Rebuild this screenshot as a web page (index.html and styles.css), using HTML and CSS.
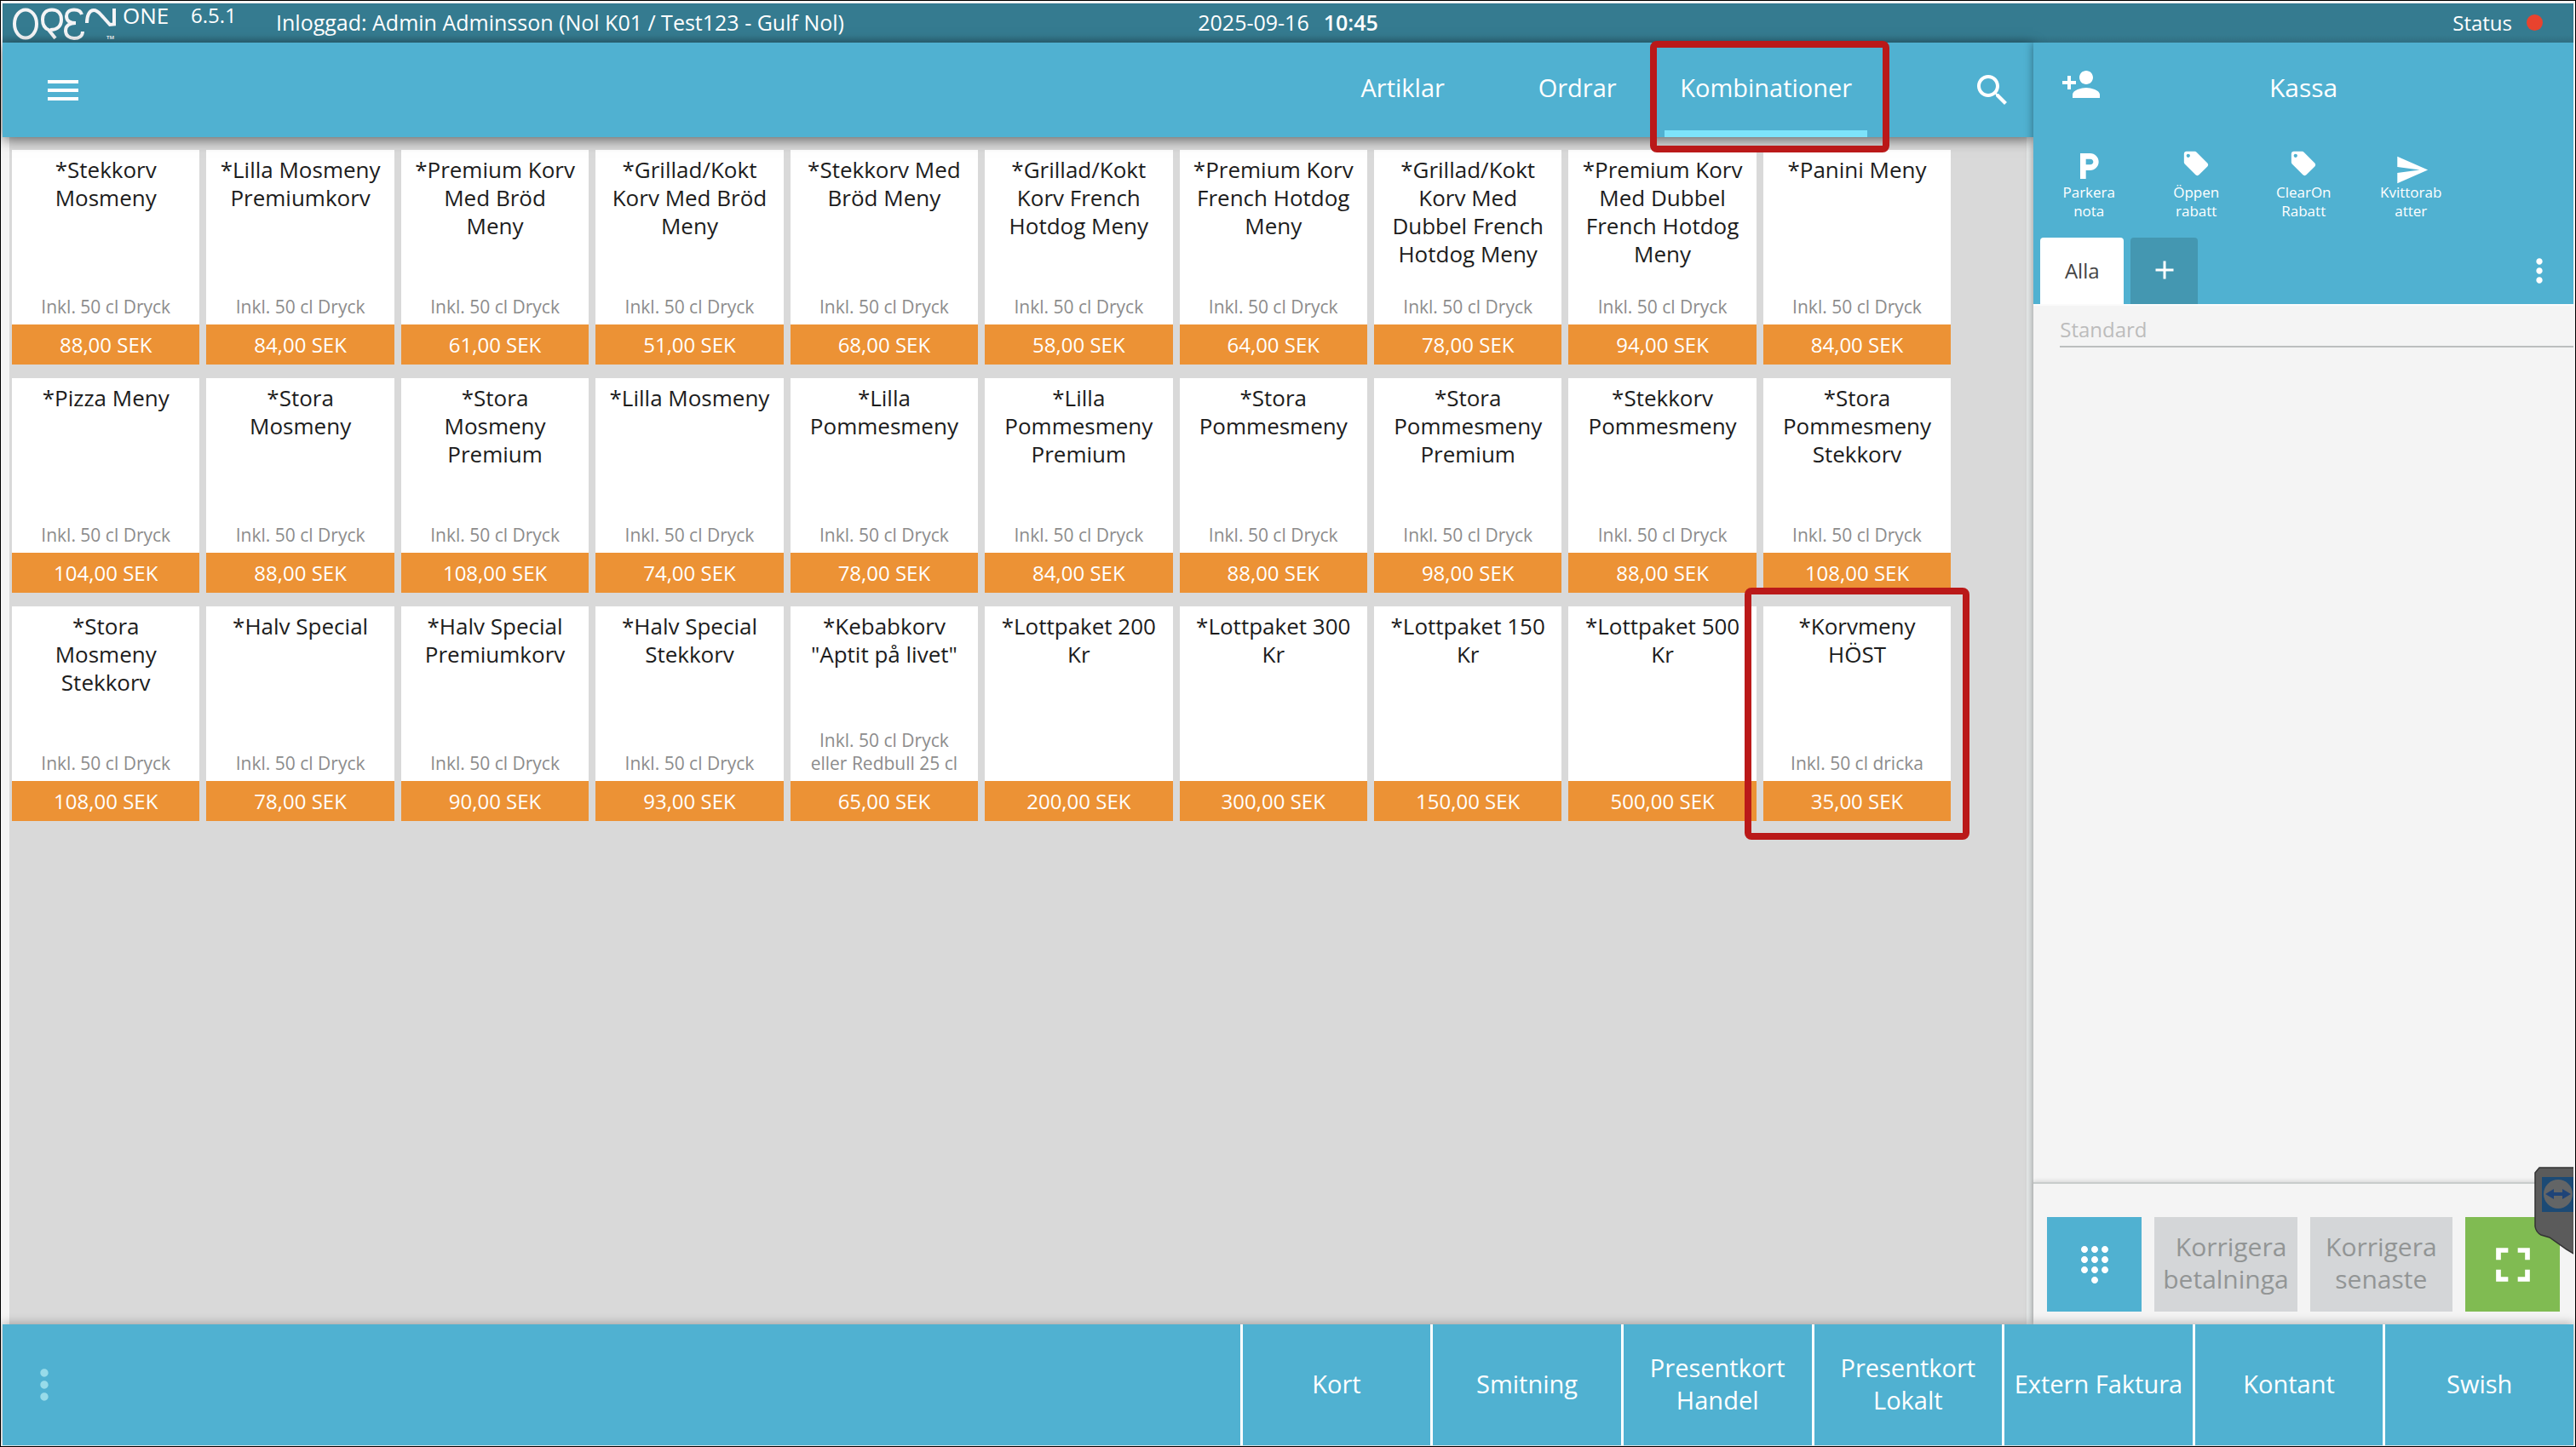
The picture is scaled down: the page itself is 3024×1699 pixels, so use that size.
FILE: index.html
```html
<!DOCTYPE html>
<html lang="sv">
<head>
<meta charset="utf-8">
<meta name="viewport" content="width=device-width, initial-scale=1">
<title>Open One – Kassa</title>
<link rel="stylesheet" href="styles.css">
</head>
<body>
<div class="app">
  <header class="topbar">
    <div class="brand">
      <svg class="logo" viewBox="0 0 130 46" aria-hidden="true">
        <g fill="none" stroke="#f4f4f6" stroke-width="4">
          <ellipse cx="19" cy="23" rx="13" ry="16.500"/>
          <path d="M54 40 L46 30 C41 28 39 24 39 18 C39 11 43 6.500 50 6.500 C57 6.500 61 11 61 18 C61 25 57 30 48 30"/>
          <path d="M85 12 C84 8 81 6.500 76 6.500 C70 6.500 67 10 67 14 C67 19 70 22 78 22 C71 22 66 25 66 31 C66 37 71 40 76 40 C82 40 86 37 86 32"/>
          <path d="M91 22 C91 13 94 7 99 7 C104 7 106 11 110 15 L118 24 L123 23.500 L123 5"/>
        </g>
        <text class="logo-tm" x="114" y="41">TM</text>
      </svg>
      <span class="product">ONE</span>
      <span class="version">6.5.1</span>
      <span class="login">Inloggad: Admin Adminsson (Nol K01 / Test123 - Gulf Nol)</span>
    </div>
    <span class="clock">2025-09-16<b>10:45</b></span>
    <span class="status">Status<i class="status-dot"></i></span>
  </header>

  <div class="body">
    <div class="left">
      <nav class="navbar">
        <button class="icon-btn menu-btn" aria-label="Meny">
          <svg width="48" height="48" viewBox="0 0 24 24"><path d="M3 18h18v-2H3zm0-5h18v-2H3zm0-7v2h18V6z"/></svg>
        </button>
        <div class="tabs">
          <a class="tab" href="#artiklar">Artiklar</a>
          <a class="tab" href="#ordrar">Ordrar</a>
          <a class="tab tab-active marked-tab" href="#kombinationer">Kombinationer</a>
        </div>
        <button class="icon-btn search-btn" aria-label="Sök">
          <svg width="48" height="48" viewBox="0 0 24 24"><path d="M15.500 14h-.79l-.28-.27C15.410 12.590 16 11.110 16 9.500 16 5.910 13.090 3 9.500 3S3 5.910 3 9.500 5.910 16 9.500 16c1.610 0 3.090-.59 4.230-1.570l.27.28v.79l5 4.990L20.490 19l-4.990-5zm-6 0C7.010 14 5 11.990 5 9.500S7.010 5 9.500 5 14 7.010 14 9.500 11.990 14 9.500 14z"/></svg>
        </button>
      </nav>

      <main class="products">
        <button class="tile"><span class="name">*Stekkorv<br>Mosmeny</span><span class="note">Inkl. 50 cl Dryck</span><span class="price">88,00 SEK</span></button>
        <button class="tile"><span class="name">*Lilla Mosmeny<br>Premiumkorv</span><span class="note">Inkl. 50 cl Dryck</span><span class="price">84,00 SEK</span></button>
        <button class="tile"><span class="name">*Premium Korv<br>Med Bröd<br>Meny</span><span class="note">Inkl. 50 cl Dryck</span><span class="price">61,00 SEK</span></button>
        <button class="tile"><span class="name">*Grillad/Kokt<br>Korv Med Bröd<br>Meny</span><span class="note">Inkl. 50 cl Dryck</span><span class="price">51,00 SEK</span></button>
        <button class="tile"><span class="name">*Stekkorv Med<br>Bröd Meny</span><span class="note">Inkl. 50 cl Dryck</span><span class="price">68,00 SEK</span></button>
        <button class="tile"><span class="name">*Grillad/Kokt<br>Korv French<br>Hotdog Meny</span><span class="note">Inkl. 50 cl Dryck</span><span class="price">58,00 SEK</span></button>
        <button class="tile"><span class="name">*Premium Korv<br>French Hotdog<br>Meny</span><span class="note">Inkl. 50 cl Dryck</span><span class="price">64,00 SEK</span></button>
        <button class="tile"><span class="name">*Grillad/Kokt<br>Korv Med<br>Dubbel French<br>Hotdog Meny</span><span class="note">Inkl. 50 cl Dryck</span><span class="price">78,00 SEK</span></button>
        <button class="tile"><span class="name">*Premium Korv<br>Med Dubbel<br>French Hotdog<br>Meny</span><span class="note">Inkl. 50 cl Dryck</span><span class="price">94,00 SEK</span></button>
        <button class="tile"><span class="name">*Panini Meny</span><span class="note">Inkl. 50 cl Dryck</span><span class="price">84,00 SEK</span></button>

        <button class="tile"><span class="name">*Pizza Meny</span><span class="note">Inkl. 50 cl Dryck</span><span class="price">104,00 SEK</span></button>
        <button class="tile"><span class="name">*Stora<br>Mosmeny</span><span class="note">Inkl. 50 cl Dryck</span><span class="price">88,00 SEK</span></button>
        <button class="tile"><span class="name">*Stora<br>Mosmeny<br>Premium</span><span class="note">Inkl. 50 cl Dryck</span><span class="price">108,00 SEK</span></button>
        <button class="tile"><span class="name">*Lilla Mosmeny</span><span class="note">Inkl. 50 cl Dryck</span><span class="price">74,00 SEK</span></button>
        <button class="tile"><span class="name">*Lilla<br>Pommesmeny</span><span class="note">Inkl. 50 cl Dryck</span><span class="price">78,00 SEK</span></button>
        <button class="tile"><span class="name">*Lilla<br>Pommesmeny<br>Premium</span><span class="note">Inkl. 50 cl Dryck</span><span class="price">84,00 SEK</span></button>
        <button class="tile"><span class="name">*Stora<br>Pommesmeny</span><span class="note">Inkl. 50 cl Dryck</span><span class="price">88,00 SEK</span></button>
        <button class="tile"><span class="name">*Stora<br>Pommesmeny<br>Premium</span><span class="note">Inkl. 50 cl Dryck</span><span class="price">98,00 SEK</span></button>
        <button class="tile"><span class="name">*Stekkorv<br>Pommesmeny</span><span class="note">Inkl. 50 cl Dryck</span><span class="price">88,00 SEK</span></button>
        <button class="tile"><span class="name">*Stora<br>Pommesmeny<br>Stekkorv</span><span class="note">Inkl. 50 cl Dryck</span><span class="price">108,00 SEK</span></button>

        <button class="tile"><span class="name">*Stora<br>Mosmeny<br>Stekkorv</span><span class="note">Inkl. 50 cl Dryck</span><span class="price">108,00 SEK</span></button>
        <button class="tile"><span class="name">*Halv Special</span><span class="note">Inkl. 50 cl Dryck</span><span class="price">78,00 SEK</span></button>
        <button class="tile"><span class="name">*Halv Special<br>Premiumkorv</span><span class="note">Inkl. 50 cl Dryck</span><span class="price">90,00 SEK</span></button>
        <button class="tile"><span class="name">*Halv Special<br>Stekkorv</span><span class="note">Inkl. 50 cl Dryck</span><span class="price">93,00 SEK</span></button>
        <button class="tile"><span class="name">*Kebabkorv<br>"Aptit på livet"</span><span class="note">Inkl. 50 cl Dryck<br>eller Redbull 25 cl</span><span class="price">65,00 SEK</span></button>
        <button class="tile"><span class="name">*Lottpaket 200<br>Kr</span><span class="price">200,00 SEK</span></button>
        <button class="tile"><span class="name">*Lottpaket 300<br>Kr</span><span class="price">300,00 SEK</span></button>
        <button class="tile"><span class="name">*Lottpaket 150<br>Kr</span><span class="price">150,00 SEK</span></button>
        <button class="tile"><span class="name">*Lottpaket 500<br>Kr</span><span class="price">500,00 SEK</span></button>
        <button class="tile marked-tile"><span class="name">*Korvmeny<br>HÖST</span><span class="note">Inkl. 50 cl dricka</span><span class="price">35,00 SEK</span></button>
      </main>
    </div>

    <aside class="register">
      <div class="register-head">
        <div class="register-title">
          <button class="icon-btn add-customer" aria-label="Lägg till kund">
            <svg width="48" height="48" viewBox="0 0 24 24"><path d="M15 12c2.210 0 4-1.790 4-4s-1.790-4-4-4-4 1.790-4 4 1.790 4 4 4zm-9-2V7H4v3H1v2h3v3h2v-3h3v-2H6zm9 4c-2.670 0-8 1.340-8 4v2h16v-2c0-2.660-5.330-4-8-4z"/></svg>
          </button>
          <h1>Kassa</h1>
        </div>
        <div class="actions">
          <button class="action"><svg width="40" height="40" viewBox="0 0 24 24"><path d="M13 3H6v18h4v-6h3c3.310 0 6-2.690 6-6s-2.690-6-6-6zm.2 8H10V7h3.200c1.100 0 2 .9 2 2s-.9 2-2 2z"/></svg><span>Parkera<br>nota</span></button>
          <button class="action"><svg width="34" height="34" viewBox="0 0 24 24"><path d="M21.410 11.580l-9-9C12.050 2.220 11.550 2 11 2H4c-1.100 0-2 .9-2 2v7c0 .55.220 1.050.59 1.420l9 9c.36.36.86.58 1.410.58.55 0 1.050-.22 1.410-.59l7-7c.37-.36.59-.86.59-1.410 0-.55-.23-1.060-.59-1.420zM5.500 7C4.670 7 4 6.330 4 5.500S4.670 4 5.500 4 7 4.670 7 5.500 6.330 7 5.500 7z"/></svg><span>Öppen<br>rabatt</span></button>
          <button class="action"><svg width="34" height="34" viewBox="0 0 24 24"><path d="M21.410 11.580l-9-9C12.050 2.220 11.550 2 11 2H4c-1.100 0-2 .9-2 2v7c0 .55.220 1.050.59 1.420l9 9c.36.36.86.58 1.410.58.55 0 1.050-.22 1.410-.59l7-7c.37-.36.59-.86.59-1.410 0-.55-.23-1.060-.59-1.420zM5.500 7C4.670 7 4 6.330 4 5.500S4.670 4 5.500 4 7 4.670 7 5.500 6.330 7 5.500 7z"/></svg><span>ClearOn<br>Rabatt</span></button>
          <button class="action"><svg width="42" height="42" viewBox="0 0 24 24"><path d="M3.010 23L23.500 14 3.010 5 3 12l15 2-15 2z"/></svg><span>Kvittorab<br>atter</span></button>
        </div>
        <div class="receipt-tabs">
          <button class="receipt-tab">Alla</button>
          <button class="receipt-tab receipt-add" aria-label="Ny flik"><svg width="36" height="36" viewBox="0 0 24 24"><path d="M19 13h-6v6h-2v-6H5v-2h6V5h2v6h6z"/></svg></button>
          <button class="icon-btn receipt-more" aria-label="Mer"><svg width="44" height="44" viewBox="0 0 24 24"><path d="M12 8c1.100 0 2-.9 2-2s-.9-2-2-2-2 .9-2 2 .9 2 2 2zm0 2c-1.100 0-2 .9-2 2s.9 2 2 2 2-.9 2-2-.9-2-2-2zm0 6c-1.100 0-2 .9-2 2s.9 2 2 2 2-.9 2-2-.9-2-2-2z"/></svg></button>
        </div>
      </div>
      <div class="receipt"><div class="receipt-group">Standard</div></div>
      <div class="keys">
        <button class="key key-pad" aria-label="Knappsats"><svg width="48" height="48" viewBox="0 0 24 24"><path d="M12 19c-1.100 0-2 .9-2 2s.9 2 2 2 2-.9 2-2-.9-2-2-2zM6 1c-1.100 0-2 .9-2 2s.9 2 2 2 2-.9 2-2-.9-2-2-2zm0 6c-1.100 0-2 .9-2 2s.9 2 2 2 2-.9 2-2-.9-2-2-2zm0 6c-1.100 0-2 .9-2 2s.9 2 2 2 2-.9 2-2-.9-2-2-2zm12-8c1.100 0 2-.9 2-2s-.9-2-2-2-2 .9-2 2 .9 2 2 2zm-6 8c-1.100 0-2 .9-2 2s.9 2 2 2 2-.9 2-2-.9-2-2-2zm6 0c-1.100 0-2 .9-2 2s.9 2 2 2 2-.9 2-2-.9-2-2-2zm0-6c-1.100 0-2 .9-2 2s.9 2 2 2 2-.9 2-2-.9-2-2-2zm-6 0c-1.100 0-2 .9-2 2s.9 2 2 2 2-.9 2-2-.9-2-2-2zm0-6c-1.100 0-2 .9-2 2s.9 2 2 2 2-.9 2-2-.9-2-2-2z"/></svg></button>
        <button class="key key-text" disabled><span>Korrigera betalningar</span></button>
        <button class="key key-text" disabled><span>Korrigera senaste</span></button>
        <button class="key key-full" aria-label="Helskärm"><svg width="68" height="68" viewBox="0 0 24 24"><path d="M7 14H5v5h5v-2H7v-3zm-2-4h2V7h3V5H5v5zm12 7h-3v2h5v-5h-2v3zM14 5v2h3v3h2V5h-5z"/></svg></button>
      </div>
      <svg class="remote" width="48" height="104" viewBox="0 0 48 104" aria-hidden="true">
        <path d="M48 1H6L1 7V70Q2 77 8 80L18 83L38 97L48 103Z" fill="#5b5b5b" stroke="#333" stroke-width="1.500"/>
        <path d="M9 12H48V53H9Z" fill="#1c4a75"/>
        <circle cx="28" cy="32" r="17" fill="#636566"/>
        <path d="M13 32L23 26V30H33V26L43 32L33 38V34H23V38Z" fill="#1f4478"/>
      </svg>
    </aside>
  </div>

  <footer class="payments">
    <button class="icon-btn payments-more" aria-label="Mer"><svg width="56" height="56" viewBox="0 0 24 24"><path d="M12 8c1.100 0 2-.9 2-2s-.9-2-2-2-2 .9-2 2 .9 2 2 2zm0 2c-1.100 0-2 .9-2 2s.9 2 2 2 2-.9 2-2-.9-2-2-2zm0 6c-1.100 0-2 .9-2 2s.9 2 2 2 2-.9 2-2-.9-2-2-2z"/></svg></button>
    <button class="pay">Kort</button>
    <button class="pay">Smitning</button>
    <button class="pay">Presentkort<br>Handel</button>
    <button class="pay">Presentkort<br>Lokalt</button>
    <button class="pay">Extern Faktura</button>
    <button class="pay">Kontant</button>
    <button class="pay">Swish</button>
  </footer>
</div>
</body>
</html>
```

FILE: styles.css
```css
* { box-sizing: border-box; }

:root {
  --blue: #50b1d1;
  --red: #ba1919;
}

body {
  margin: 0;
  min-height: 100vh;
  display: flex;
  border: 1px solid #000;
  background: #f4f4f4;
  font-family: "Open Sans", "Noto Sans", sans-serif;
  font-size: 24px;
  color: #fff;
}

button {
  margin: 0;
  padding: 0;
  border: 0;
  background: none;
  color: inherit;
  font: inherit;
}

svg { display: block; fill: currentColor; }

.app {
  flex: 1;
  min-width: 0;
  display: flex;
  flex-direction: column;
  padding: 3px 2px 1px;
}

/* Top status bar */
.topbar {
  height: 46px;
  display: grid;
  grid-template-columns: 1fr auto 1fr;
  background: linear-gradient(#357b90, #357b90 80%, #306f82);
  border-top: 1px solid #2f7791;
}
.brand { display: grid; grid-template-columns: 141px 80px 100px 1fr; }
.logo { width: 130px; height: 46px; margin-left: 8px; }
.logo-tm { font-size: 6px; font-weight: 700; fill: #e8eef0; }
.product, .version { line-height: 26px; }
.product { font-size: 26px; }
.login, .clock, .status { line-height: 42px; white-space: nowrap; }
.login, .clock { font-size: 25px; }
.clock b { margin-left: 17px; font-weight: 600; }
.status {
  height: 43px;
  display: flex;
  justify-content: flex-end;
  align-items: center;
  gap: 17px;
  padding-right: 36px;
}
.status-dot { width: 19px; height: 19px; border-radius: 50%; background: #e8432e; }

.body { flex: 1; display: flex; min-height: 0; }
.left { flex: 1; min-width: 0; display: flex; flex-direction: column; }

/* Main navigation */
.navbar {
  position: relative;
  z-index: 1;
  height: 111px;
  display: flex;
  align-items: center;
  padding: 0 24px 0 47px;
  background: var(--blue);
  box-shadow: 0 3px 14px rgba(0, 0, 0, .55);
}
.tabs { display: flex; align-self: stretch; margin-left: auto; }
.tab {
  min-width: 205px;
  padding: 0 18px;
  line-height: 106px;
  font-size: 29px;
  text-align: center;
  color: inherit;
  text-decoration: none;
}
.tab-active { position: relative; border-bottom: 8px solid #7de3fa; }
.search-btn { margin-left: 123px; }

/* Highlight frames */
.marked-tab::after, .marked-tile::after {
  content: "";
  position: absolute;
  border: 8px solid var(--red);
  border-radius: 8px;
  pointer-events: none;
}
.marked-tab::after { inset: -2px -26px -26px -17px; }
.marked-tile::after { inset: -22px; }

/* Product grid */
.products {
  flex: 1;
  display: grid;
  grid-template-columns: repeat(10, 1fr);
  grid-auto-rows: 252px;
  align-content: start;
  gap: 16px 8px;
  margin-left: 8px;
  padding: 15px 89px 15px 3px;
  border-right: 8px solid #e9ecec;
  background: #d9d9d9;
}
.tile {
  position: relative;
  display: flex;
  flex-direction: column;
  background: #fff;
  color: #1c1c1c;
  white-space: nowrap;
}
.name { padding-top: 7px; font-size: 26px; line-height: 33px; }
.name, .note, .price { align-self: stretch; }
.note { margin-top: auto; padding-bottom: 7px; font-size: 21px; line-height: 27px; color: #8c8c8c; }
.price { background: #ec9235; color: #fff; line-height: 47px; }
.name + .price { margin-top: auto; }

/* Register column */
.register {
  position: relative;
  z-index: 2;
  flex: 0 0 21%;
  display: flex;
  flex-direction: column;
  background: #f4f4f4;
  box-shadow: 0 0 10px rgba(0, 0, 0, .4);
  clip-path: inset(0 0 0 -16px);
}
.register-head { background: var(--blue); }
.register-title {
  height: 105px;
  display: grid;
  grid-template-columns: 80px 1fr 80px;
  align-items: center;
}
.add-customer { justify-self: end; margin-bottom: 8px; }
.register-title h1 {
  margin: 0;
  text-align: center;
  font-size: 30px;
  font-weight: 400;
}
.actions { display: flex; height: 124px; padding: 20px 0 0 2px; }
.action {
  flex: 0 0 126px;
  display: grid;
  grid-template-rows: 40px auto;
  justify-items: center;
  align-content: start;
  font-size: 17px;
  line-height: 22px;
}
.receipt-tabs { display: flex; gap: 8px; height: 78px; padding: 0 18px 0 8px; }
.receipt-tab {
  flex: 0 0 98px;
  padding-bottom: 2px;
  border-radius: 4px 4px 0 0;
  background: #fff;
  color: #444;
}
.receipt-add {
  flex-basis: 79px;
  display: grid;
  place-items: center;
  background: #4497b1;
  color: #fff;
}
.receipt-more { margin-left: auto; }
.receipt { flex: 1; padding: 11px 0 0 31px; border-top: 2px solid #fbfbfb; }
.receipt-group { padding-bottom: 2px; line-height: 34px; border-bottom: 2px solid #bcbfbf; color: #bcbcbc; }

.keys {
  display: grid;
  grid-template-columns: 111px 1fr 1fr 111px;
  gap: 15px;
  padding: 39px 16px 15px;
  border-top: 2px solid #c8cccb;
  box-shadow: 0 -2px 4px rgba(0, 0, 0, .1);
}
.key { height: 111px; display: grid; place-items: center; min-width: 0; }
.key-pad { background: var(--blue); }
.key-full { background: #80bb52; }
/* The side borders clip a label that is too wide for its key */
.key-text {
  overflow: hidden;
  border: solid #d4d6d8;
  border-width: 0 10px 4px;
  background: #d4d6d8;
  color: #929595;
  font-size: 30px;
  line-height: 38px;
}

.remote { position: absolute; right: -2px; bottom: 81px; }

/* Payment bar */
.payments {
  position: relative;
  z-index: 3;
  display: flex;
  height: 142px;
  background: var(--blue);
  box-shadow: 0 -2px 10px rgba(0, 0, 0, .25);
}
.payments-more { margin: 0 auto 0 21px; color: #98dbe9; }
.pay {
  flex: 0 0 7.410%;
  padding-bottom: 3px;
  border-left: 3px solid #fff;
  font-size: 29px;
  line-height: 38px;
  white-space: nowrap;
}
```
